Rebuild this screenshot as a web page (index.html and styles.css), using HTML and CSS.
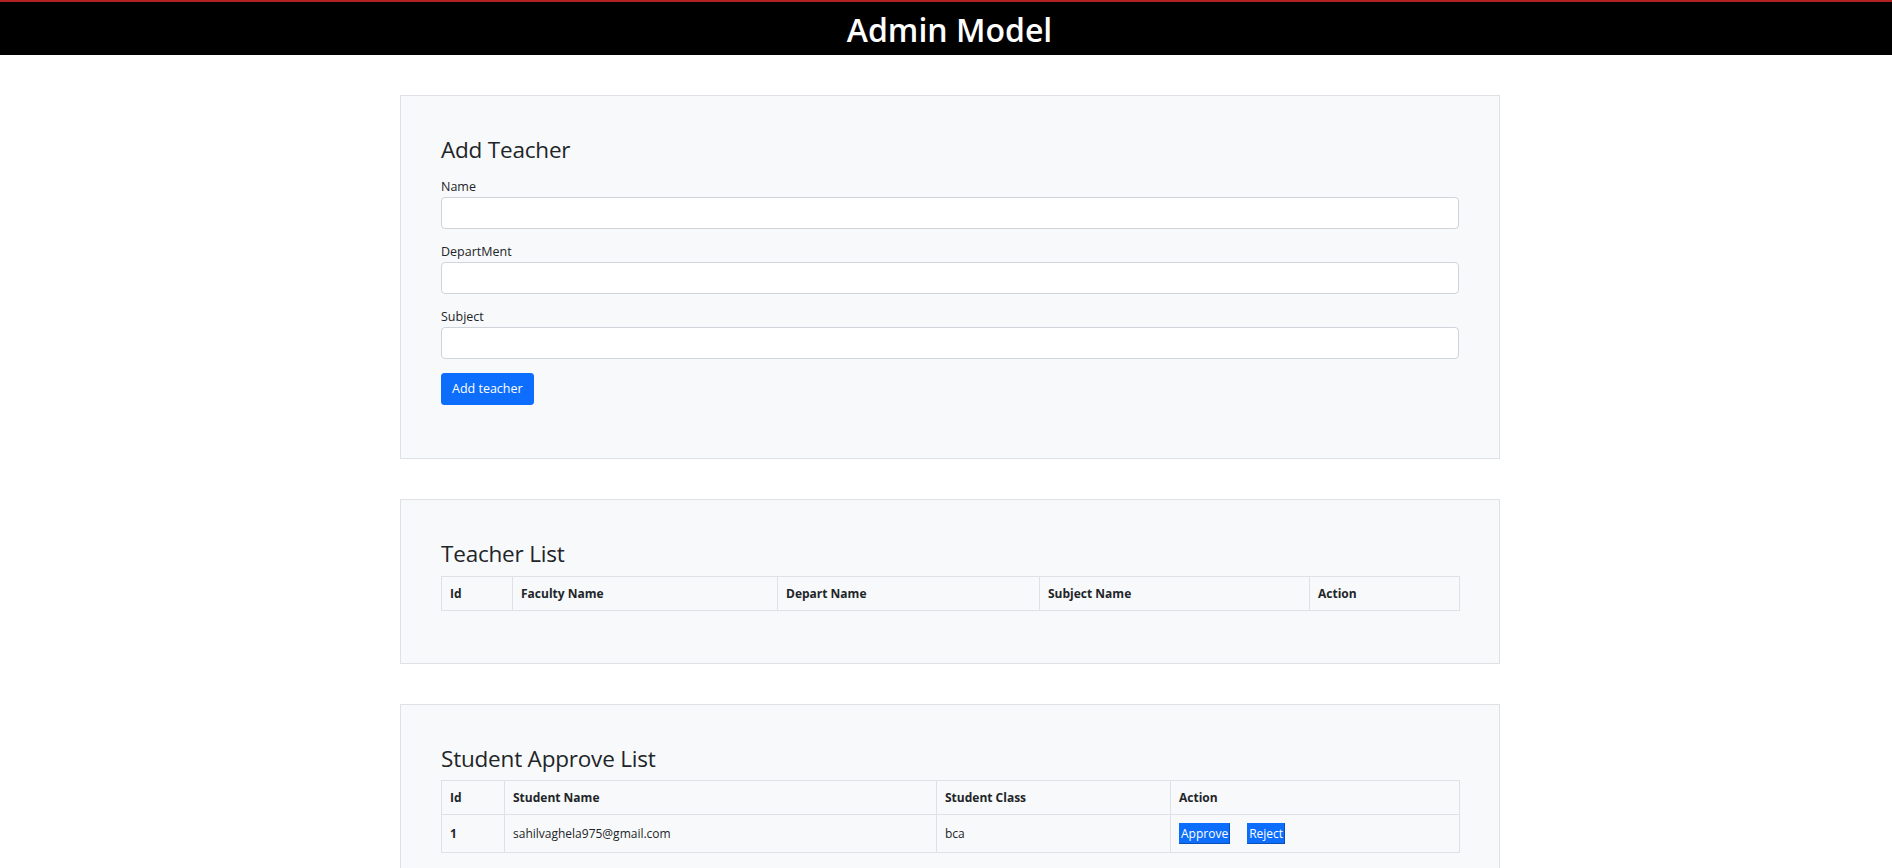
FILE: index.html
```html
<!DOCTYPE html>
<html lang="en">
<head>
<meta charset="utf-8">
<title>Admin Model</title>
<link rel="stylesheet" href="styles.css">
</head>
<body>
<header class="topbar">
  <h1 class="topbar-title">Admin Model</h1>
</header>
<main class="page">
  <section class="panel panel-form">
    <h4 class="panel-title panel-title-form">Add Teacher</h4>
    <form class="teacher-form">
      <div class="field">
        <label class="field-label" for="name">Name</label>
        <input class="field-input" id="name" type="text">
      </div>
      <div class="field">
        <label class="field-label" for="dept">DepartMent</label>
        <input class="field-input" id="dept" type="text">
      </div>
      <div class="field">
        <label class="field-label" for="subject">Subject</label>
        <input class="field-input" id="subject" type="text">
      </div>
      <button class="btn-primary" type="button">Add teacher</button>
    </form>
  </section>

  <section class="panel">
    <h4 class="panel-title">Teacher List</h4>
    <table class="data-table">
      <colgroup>
        <col class="tc-id"><col class="tc-fac"><col class="tc-dep"><col class="tc-sub"><col class="tc-act">
      </colgroup>
      <thead>
        <tr><th>Id</th><th>Faculty Name</th><th>Depart Name</th><th>Subject Name</th><th>Action</th></tr>
      </thead>
      <tbody></tbody>
    </table>
  </section>

  <section class="panel">
    <h4 class="panel-title">Student Approve List</h4>
    <table class="data-table">
      <colgroup>
        <col class="sc-id"><col class="sc-name"><col class="sc-class"><col class="sc-act">
      </colgroup>
      <thead>
        <tr><th>Id</th><th>Student Name</th><th>Student Class</th><th>Action</th></tr>
      </thead>
      <tbody>
        <tr>
          <th>1</th>
          <td>sahilvaghela975@gmail.com</td>
          <td>bca</td>
          <td class="actions"><button class="mini-btn" type="button">Approve</button><button class="mini-btn" type="button">Reject</button></td>
        </tr>
      </tbody>
    </table>
  </section>
</main>
</body>
</html>
```
FILE: styles.css
```css
* { box-sizing: border-box; }

html, body {
  margin: 0;
  padding: 0;
  background: #ffffff;
  color: #212529;
  font-family: "Open Sans", "Noto Sans", sans-serif;
}

.topbar {
  background: #000000;
  border-top: 2px solid #b22222;
  padding: 9px 0 6px 7px;
  text-align: center;
}

.topbar-title {
  margin: 0;
  color: #ffffff;
  font-size: 32px;
  line-height: 38px;
  font-weight: 600;
  letter-spacing: 0;
}

.page {
  display: flex;
  flex-direction: column;
  align-items: center;
  padding: 40px 0 0 8px;
  gap: 40px;
}

.panel {
  width: 1100px;
  background: #f8f9fa;
  border: 1px solid #dee2e6;
  padding: 40px 40px 52px;
}

.panel-form {
  padding-bottom: 53px;
}

.panel-title {
  margin: 0 0 7px;
  font-size: 22.5px;
  line-height: 28.8px;
  font-weight: 500;
  letter-spacing: -0.2px;
}

.panel-title-form {
  margin-bottom: 11px;
}

.teacher-form {
  display: flex;
  flex-direction: column;
  align-items: flex-start;
}

.field {
  display: flex;
  flex-direction: column;
  width: 100%;
  margin-bottom: 12px;
}

.field-label {
  font-size: 12.5px;
  line-height: 21px;
}

.field-input {
  height: 32px;
  width: 100%;
  background: #ffffff;
  border: 1px solid #ced4da;
  border-radius: 4px;
  font: inherit;
  font-size: 14px;
  padding: 4px 8px;
}

.btn-primary {
  margin-top: 2px;
  height: 32px;
  background: #0d6efd;
  color: #ffffff;
  border: 1px solid #0d6efd;
  border-radius: 3px;
  padding: 0 10px;
  font-family: inherit;
  font-size: 12.5px;
  line-height: 20px;
}

.data-table {
  width: 100%;
  border-collapse: collapse;
  table-layout: fixed;
  font-size: 12px;
}

.data-table th,
.data-table td {
  border: 1px solid #dee2e6;
  padding: 8px;
  line-height: 17px;
  text-align: left;
  vertical-align: middle;
}

.data-table th { font-weight: 700; }
.data-table td { font-weight: 400; }

.tc-id { width: 71px; }
.tc-fac { width: 265px; }
.tc-dep { width: 262px; }
.tc-sub { width: 270px; }
.tc-act { width: 150px; }

.sc-id { width: 63px; }
.sc-name { width: 432px; }
.sc-class { width: 234px; }
.sc-act { width: 289px; }

.actions {
  padding-top: 7px;
  padding-bottom: 7px;
}

.mini-btn {
  height: 21px;
  padding: 0 1px;
  background: #0d6efd;
  color: #ffffff;
  border: 1px solid;
  border-color: #0d6efd #0a4fb8 #0a4fb8 #0d6efd;
  border-radius: 0;
  font-family: inherit;
  font-size: 12px;
  line-height: 19px;
  vertical-align: middle;
}

.mini-btn + .mini-btn {
  margin-left: 17px;
}
```
